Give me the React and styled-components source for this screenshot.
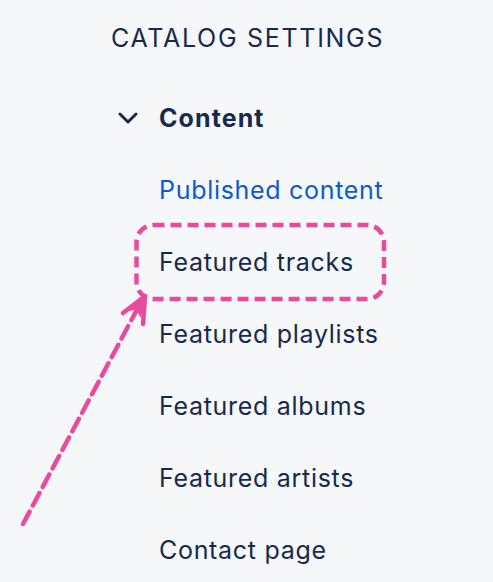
import React from "react";
import styled, { createGlobalStyle } from "styled-components";

const Global = createGlobalStyle`
  html, body { margin: 0; padding: 0; background: #f6f7f9; }
  body { font-family: Inter, "Noto Sans", sans-serif; -webkit-font-smoothing: antialiased; }
`;

const Page = styled.div`
  position: relative;
  width: 493px;
  height: 582px;
  overflow: hidden;
  box-sizing: border-box;
  padding: 20px 0 0 111px;
  background: #f6f7f9;
  color: #172a4e;
`;

const Title = styled.h1`
  margin: 0;
  height: 36px;
  line-height: 36px;
  font-size: 25px;
  font-weight: 400;
  letter-spacing: 1.7px;
`;

const SectionHeader = styled.div`
  margin-top: 26px;
  height: 72px;
  display: flex;
  align-items: center;
  gap: 21px;
  padding-left: 7px;
  font-size: 25px;
  font-weight: 700;
  letter-spacing: 1.1px;
`;

const List = styled.ul`
  list-style: none;
  margin: 0;
  padding: 0 0 0 48px;
`;

const Item = styled.li`
  position: relative;
  height: 72px;
  display: flex;
  align-items: center;
  font-size: 25px;
  font-weight: 400;
  letter-spacing: 0.7px;
  color: ${(p) => (p.$active ? "#0b5ad4" : "#172a4e")};
`;

const Highlight = styled.svg`
  position: absolute;
  left: -26px;
  top: -4px;
  width: 254px;
  height: 80px;
  overflow: visible;
  pointer-events: none;
`;

const Arrow = styled.svg`
  position: absolute;
  left: 0;
  top: 0;
  width: 493px;
  height: 582px;
  pointer-events: none;
`;

const PINK = "#ea4a9e";

const items = [
  { label: "Published content", active: true },
  { label: "Featured tracks", highlight: true },
  { label: "Featured playlists" },
  { label: "Featured albums" },
  { label: "Featured artists" },
  { label: "Contact page" },
];

export default function App() {
  return (
    <>
      <Global />
      <Page>
        <Title>CATALOG SETTINGS</Title>
        <SectionHeader>
          <svg width="20" height="12" viewBox="0 0 20 12">
            <path d="M2 2 L10 10 L18 2" fill="none" stroke="#172a4e" strokeWidth="3" strokeLinecap="round" strokeLinejoin="round" />
          </svg>
          Content
        </SectionHeader>
        <List>
          {items.map((it) => (
            <Item key={it.label} $active={it.active}>
              {it.label}
              {it.highlight && (
                <Highlight viewBox="0 0 254 80">
                  <rect x="3.5" y="3" width="247.5" height="74" rx="17" fill="none" stroke={PINK} strokeWidth="4.5" strokeDasharray="11 6" />
                </Highlight>
              )}
            </Item>
          ))}
        </List>
        <Arrow viewBox="0 0 493 582">
          <path d="M23 524 L141 302" fill="none" stroke={PINK} strokeWidth="4.5" strokeDasharray="14 7" strokeLinecap="round" />
          <path d="M123 313 L145 296 L143 324" fill="none" stroke={PINK} strokeWidth="4.5" strokeLinecap="round" strokeLinejoin="round" />
          <path d="M127 311 L145 296 L141 318 L136 310 Z" fill={PINK} />
        </Arrow>
      </Page>
    </>
  );
}
